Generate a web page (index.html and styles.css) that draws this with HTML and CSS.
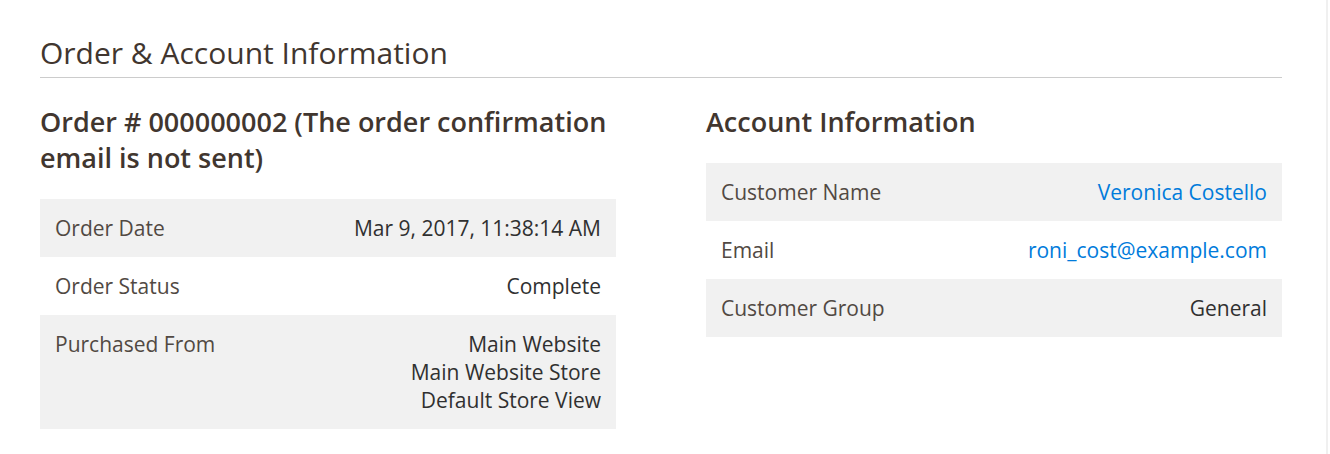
FILE: index.html
```html
<!DOCTYPE html>
<html>
<head>
<meta charset="utf-8">
<link rel="stylesheet" href="styles.css">
</head>
<body>
<div class="page">
  <section class="section">
    <h1 class="section-title">Order &amp; Account Information</h1>
    <div class="columns">
      <div class="item">
        <h2 class="item-title">Order # 000000002 (The order confirmation email is not sent)</h2>
        <table class="info">
          <tr><th>Order Date</th><td>Mar 9, 2017, 11:38:14 AM</td></tr>
          <tr><th>Order Status</th><td>Complete</td></tr>
          <tr><th>Purchased From</th><td>Main Website<br>Main Website Store<br>Default Store View</td></tr>
        </table>
      </div>
      <div class="item">
        <h2 class="item-title">Account Information</h2>
        <table class="info">
          <tr><th>Customer Name</th><td><a class="link" href="#">Veronica Costello</a></td></tr>
          <tr><th>Email</th><td><a class="link" href="#">roni_cost@example.com</a></td></tr>
          <tr><th>Customer Group</th><td>General</td></tr>
        </table>
      </div>
    </div>
  </section>
</div>
</body>
</html>
```
FILE: styles.css
```css
html, body {
  margin: 0;
  padding: 0;
  background: #ffffff;
}
body {
  font-family: "Open Sans", "Liberation Sans", sans-serif;
  color: #303030;
}
.page {
  width: 1328px;
  height: 454px;
  box-sizing: border-box;
  border-right: 2px solid #f0f0f0;
  padding: 0 44px 0 40px;
}
.section-title {
  margin: 0;
  padding-top: 32px;
  font-size: 30px;
  line-height: 41px;
  font-weight: 400;
  color: #41362f;
  border-bottom: 1px solid #cccccc;
  box-sizing: border-box;
  height: 78px;
}
.columns {
  display: grid;
  grid-template-columns: 576px 576px;
  column-gap: 90px;
  padding-top: 26px;
}
.item-title {
  margin: 0 0 23px;
  font-size: 27px;
  line-height: 36px;
  font-weight: 600;
  color: #41362f;
}
.info {
  width: 100%;
  border-collapse: collapse;
  font-size: 21px;
  line-height: 28px;
}
.info tr:nth-child(odd) {
  background: #f1f1f1;
}
.info th,
.info td {
  padding: 15px;
  vertical-align: top;
}
.info th {
  text-align: left;
  font-weight: 400;
  color: #514943;
}
.info td {
  text-align: right;
  color: #303030;
}
.link {
  color: #007bdb;
  text-decoration: none;
}
```
